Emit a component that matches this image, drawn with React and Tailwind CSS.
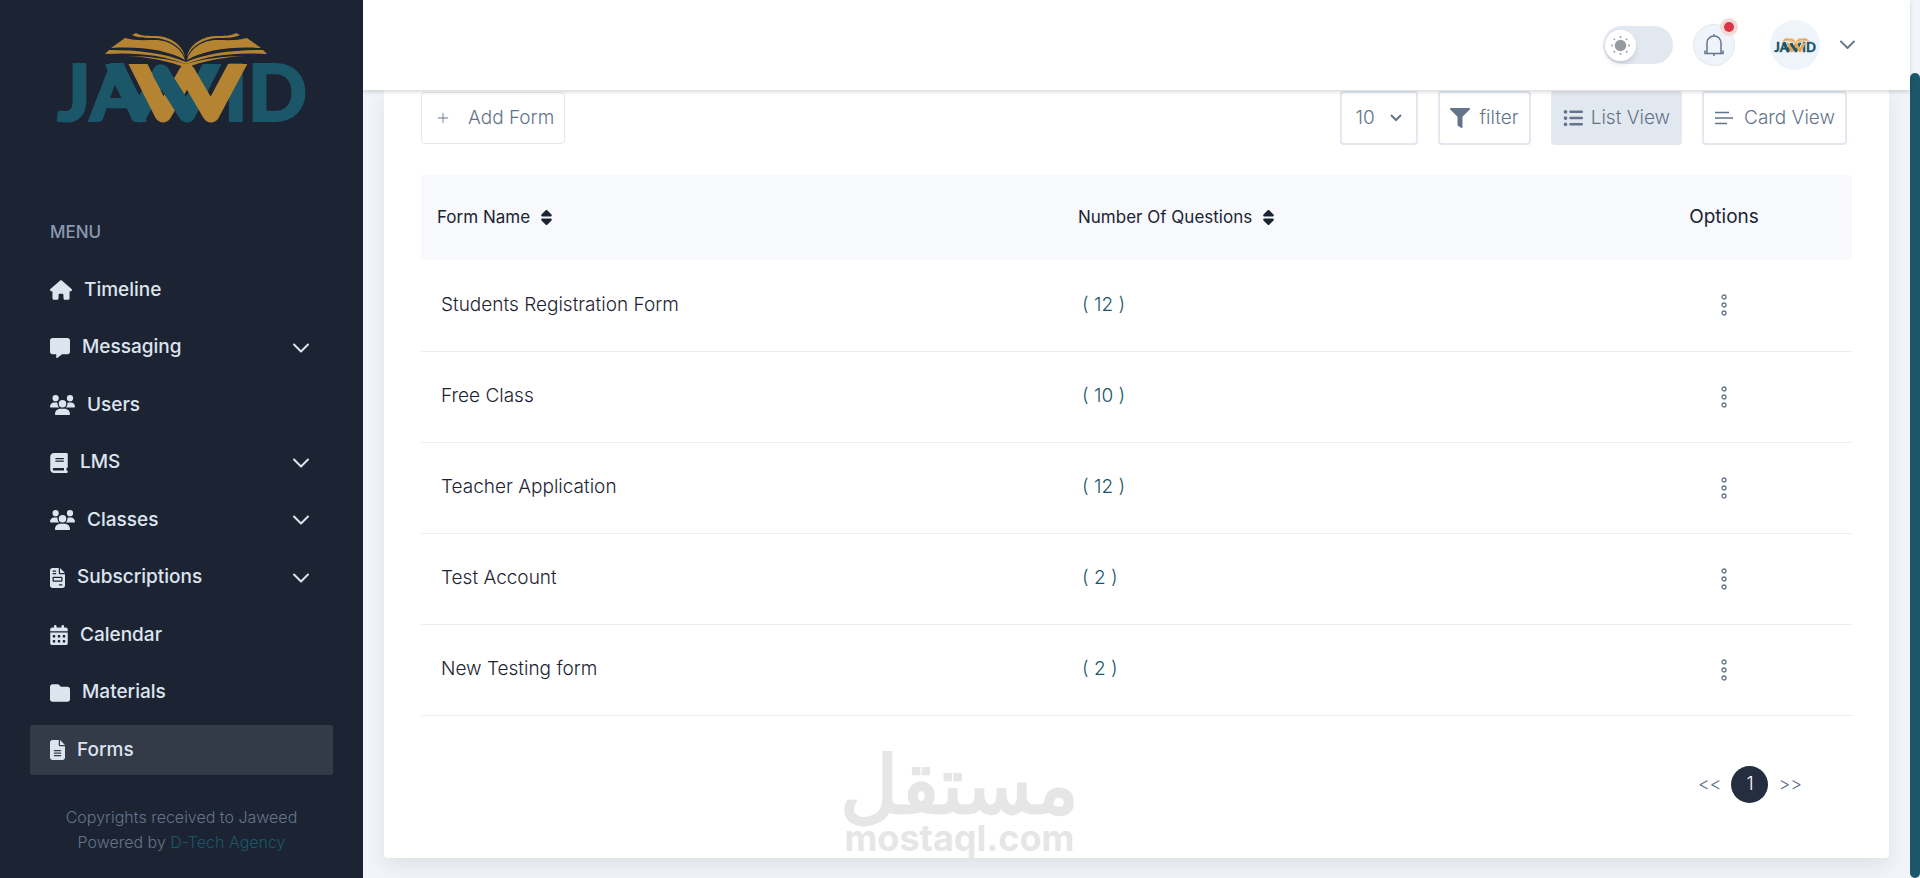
import {
  FaHouse,
  FaMessage,
  FaUsers,
  FaBook,
  FaFileInvoice,
  FaCalendarDays,
  FaFolder,
  FaFileLines,
  FaSort,
  FaListUl,
} from "react-icons/fa6";
import { FaFilter } from "react-icons/fa";
import { BsPlusLg } from "react-icons/bs";

const menu = [
  { label: "Timeline", icon: FaHouse, size: "w-[22px]" },
  { label: "Messaging", icon: FaMessage, size: "w-5", sub: true },
  { label: "Users", icon: FaUsers, size: "w-[25px]" },
  { label: "LMS", icon: FaBook, size: "w-[18px]", sub: true },
  { label: "Classes", icon: FaUsers, size: "w-[25px]", sub: true },
  { label: "Subscriptions", icon: FaFileInvoice, size: "w-[15px]", sub: true },
  { label: "Calendar", icon: FaCalendarDays, size: "w-[18px]" },
  { label: "Materials", icon: FaFolder, size: "w-5" },
  { label: "Forms", icon: FaFileLines, size: "w-[15px]", active: true },
];

const forms = [
  { name: "Students Registration Form", questions: 12 },
  { name: "Free Class", questions: 10 },
  { name: "Teacher Application", questions: 12 },
  { name: "Test Account", questions: 2 },
  { name: "New Testing form", questions: 2 },
];

function Chevron({ className }) {
  return (
    <svg
      viewBox="0 0 16 10"
      className={className}
      fill="none"
      stroke="currentColor"
      strokeWidth="2"
      strokeLinecap="round"
      strokeLinejoin="round"
      aria-hidden="true"
    >
      <path d="M1 1.5L8 8.5L15 1.5" />
    </svg>
  );
}

function BookHalf() {
  return (
    <>
      <path d="M132 35L136 33C141 36 148 36 157 36C172 37 183 46 185 57C180 45 168 39 155 38C146 38 138 38 132 35Z" />
      <path d="M111 48L125 38C135 41 145 40 155 40C170 40 182 49 185 60C168 50 140 46 111 48Z" />
      <path d="M105 54L109 50C138 50 165 53 186 62V64C162 55 136 52 105 54Z" />
      <path d="M127 56C148 56 170 59 186 64V68C170 61 148 57 127 56Z" />
    </>
  );
}

function Logo({ className, teal, gold }) {
  return (
    <svg viewBox="56 32 251 92" className={`overflow-visible ${className}`} role="img" aria-label="Jawwid">
      {/* Open book */}
      <g fill={gold}>
        <BookHalf />
        <g transform="matrix(-1 0 0 1 372 0)">
          <BookHalf />
        </g>
      </g>

      {/* Wordmark */}
      <g fontFamily="Lato, sans-serif" fontWeight="900" fontSize="78" fill={teal} stroke={teal} strokeWidth="2">
        <text x="57" y="121">JA</text>
        <text x="307" y="121" textAnchor="end">ID</text>
      </g>

      {/* Woven ribbons */}
      <svg x="56" y="64" width="250" height="60" viewBox="56 64 250 60" fill="none" strokeWidth="17" strokeLinejoin="round" strokeLinecap="round">
        <path stroke={teal} d="M114 64L139 114L161 73" />
        <path stroke={gold} d="M133 54L163 114L187 73" />
        <path stroke={teal} d="M161 73L187 114L217 54" />
        <path stroke={gold} d="M187 73L211 114L243 54" />
      </svg>
    </svg>
  );
}

function Sidebar() {
  return (
    <aside className="flex w-[363px] shrink-0 flex-col bg-[#1c2434] px-[30px] pt-8">
      <Logo className="mx-auto h-[92px] w-[251px]" teal="#1b5768" gold="#b58432" />

      <h3 className="mt-24 px-5 text-[17px] leading-[25px] font-medium text-[#8a99af]">MENU</h3>

      <nav className="mt-5">
        <ul className="flex h-[510px] flex-col justify-between">
          {menu.map(({ label, icon: Icon, size, sub, active }) => (
            <li key={label}>
              <a
                href="#"
                className={`flex h-[50px] items-center gap-3 rounded-xs px-5 text-[19px] font-medium text-[#dee4ee] ${active ? "bg-[#333a48]" : ""}`}
              >
                <Icon className={`h-5 ${size}`} />
                <span className="flex-1">{label}</span>
                {sub && <Chevron className="mr-1 w-4" />}
              </a>
            </li>
          ))}
        </ul>
      </nav>

      <p className="mt-[30px] text-center text-base leading-[25px] font-light text-[#64748b]">
        Copyrights received to Jaweed
        <br />
        Powered by{" "}
        <a href="#" className="text-[#1b5768]">
          D-Tech Agency
        </a>
      </p>
    </aside>
  );
}

function Header() {
  return (
    <header className="relative z-10 flex h-[90px] shrink-0 items-center justify-end bg-white pr-[55px] shadow-[0_2px_4px_rgba(0,0,0,0.15)]">
      <label className="relative block h-[38px] w-[70px] rounded-full bg-[#e2e8f0]">
        <input type="checkbox" className="sr-only" aria-label="Dark mode" />
        <span className="absolute top-1 left-0.5 flex size-[31px] items-center justify-center rounded-full bg-white shadow-md">
          <svg width="19" height="19" viewBox="-10 -10 20 20" fill="#969aa1">
            <circle r="6" />
            <circle cx="0" cy="-9" r="1" />
            <circle cx="0" cy="9" r="1" />
            <circle cx="-9" cy="0" r="1" />
            <circle cx="9" cy="0" r="1" />
            <circle cx="-6.5" cy="-6.5" r="1" />
            <circle cx="6.5" cy="-6.5" r="1" />
            <circle cx="-6.5" cy="6.5" r="1" />
            <circle cx="6.5" cy="6.5" r="1" />
          </svg>
        </span>
      </label>

      <button
        type="button"
        aria-label="Notifications"
        className="relative ml-5 flex size-[42px] items-center justify-center rounded-full border border-[#e2e8f0] bg-[#eff4fb] text-[#64748b]"
      >
        <svg width="20" height="22" viewBox="0 0 20 22" fill="none" stroke="currentColor" strokeWidth="1.5">
          <path d="M10 0V2M3 19V9C3 5 6 2 10 2S17 5 17 9V19M1 16.5V19.5H19V16.5M10 20V22" />
        </svg>
        <span className="absolute -top-[7px] -right-1 flex size-[18px] items-center justify-center rounded-full bg-[#f1dbd9]">
          <span className="size-2.5 rounded-full bg-[#dc3545]" />
        </span>
      </button>

      <button type="button" aria-label="Account" className="ml-[35px] flex items-center gap-5 text-[#64748b]">
        <span className="flex size-[50px] items-center justify-center rounded-full bg-[#eff4fb]">
          <Logo className="h-4 w-[42px]" teal="#1b5768" gold="#e5a657" />
        </span>
        <Chevron className="w-[15px]" />
      </button>
    </header>
  );
}

function Toolbar() {
  const button = "flex h-[54px] items-center rounded border-2 border-[#e2e8f0] text-[19px] font-light text-[#64748b]";
  return (
    <div className="flex items-center justify-between pt-px pr-[5px]">
      <button
        type="button"
        className="flex h-[52px] items-center gap-[18px] rounded border border-[#e2e8f0] pr-2.5 pl-3.5 text-[19px] font-light text-[#64748b]"
      >
        <BsPlusLg size={14} />
        Add Form
      </button>

      <div className="flex gap-5">
        <div className="relative flex items-center">
          <select aria-label="Rows per page" className={`${button} w-[78px] appearance-none bg-white pl-3.5`}>
            <option>10</option>
          </select>
          <svg
            width="12"
            height="8"
            viewBox="0 0 12 8"
            fill="none"
            stroke="currentColor"
            strokeWidth="2"
            className="pointer-events-none absolute right-4 text-[#64748b]"
          >
            <path d="M1 1L6 6L11 1" />
          </svg>
        </div>
        <button type="button" className={`${button} gap-2.5 px-2.5`}>
          <FaFilter size={20} />
          filter
        </button>
        <button type="button" className={`${button} gap-2 bg-[#e2e8f0] px-2.5`}>
          <FaListUl size={20} />
          List View
        </button>
        <button type="button" className={`${button} gap-2.5 px-2.5`}>
          <svg width="20" height="14" viewBox="0 0 20 14" stroke="currentColor" strokeWidth="1.5">
            <path d="M1 1.5H15M1 7H19M1 12.5H13" />
          </svg>
          Card View
        </button>
      </div>
    </div>
  );
}

function FormsTable() {
  return (
    <table className="mt-[30px] w-full table-fixed text-left">
      <thead>
        <tr className="h-[85px] bg-[#f7f9fc] text-[#1c2434]">
          <th className="w-[641px] px-4 text-[17px] font-normal">
            <button type="button" className="flex items-center gap-2">
              Form Name <FaSort />
            </button>
          </th>
          <th className="px-4 text-[17px] font-normal">
            <button type="button" className="flex items-center gap-2">
              Number Of Questions <FaSort />
            </button>
          </th>
          <th className="w-64 text-center text-[19px] font-normal">Options</th>
        </tr>
      </thead>
      <tbody>
        {forms.map((form) => (
          <tr key={form.name} className="h-[91px] border-b border-[#eeeeee] text-[19px] font-light text-[#1c2434]">
            <td className="px-5">{form.name}</td>
            <td className="px-5 text-[#1b5768]">( {form.questions} )</td>
            <td>
              <button type="button" aria-label="Options" className="mx-auto block text-[#64748b]">
                <svg width="6" height="22" viewBox="0 0 6 22" fill="none" stroke="currentColor" strokeWidth="1.3">
                  <circle cx="3" cy="3" r="2" />
                  <circle cx="3" cy="11" r="2" />
                  <circle cx="3" cy="19" r="2" />
                </svg>
              </button>
            </td>
          </tr>
        ))}
      </tbody>
    </table>
  );
}

function Watermark() {
  return (
    <div className="pointer-events-none absolute bottom-0 left-[456px] text-center font-bold text-[#e6e6e6]">
      <p className="text-[80px] leading-[68px]" lang="ar" dir="rtl">مستقل</p>
      <p className="text-4xl">mostaql.com</p>
    </div>
  );
}

export default function App() {
  return (
    <div className="flex h-screen overflow-hidden bg-[#f1f5f9] font-['Inter',sans-serif]">
      <Sidebar />

      <div className="flex min-w-0 flex-1 flex-col">
        <Header />

        <main className="flex flex-1 flex-col px-[21px] pb-5">
          <section className="relative flex-1 rounded-b bg-white px-[37px] shadow-[0_8px_20px_rgba(0,0,0,0.08)]">
            <Toolbar />
            <FormsTable />
            <nav aria-label="Pages" className="mt-[50px] flex items-center justify-end gap-2.5 pr-[50px] text-lg font-light text-[#64748b]">
              <button type="button">&lt;&lt;</button>
              <button type="button" className="size-[37px] rounded-full bg-[#242e3f] text-white">1</button>
              <button type="button">&gt;&gt;</button>
            </nav>
            <Watermark />
          </section>
        </main>
      </div>

      <div className="flex w-2.5 items-end bg-[#f1f5f9]">
        <div className="h-[805px] w-full rounded-full bg-[#1b5768]" />
      </div>
    </div>
  );
}
